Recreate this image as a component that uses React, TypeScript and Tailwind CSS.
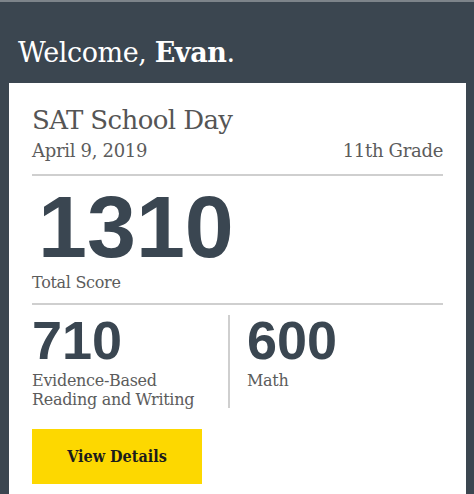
export default function App() {
  const serif = { fontFamily: '"DejaVu Serif", serif' } as const;
  const sans = { fontFamily: '"Liberation Sans", Arial, sans-serif' } as const;
  return (
    <div className="w-[474px] h-[494px] overflow-hidden bg-[#3b4650] border-t-2 border-[#7d848a]">
      <div className="pl-[18px] pt-[35px] h-[81px]">
        <h1 className="text-[27px] leading-[32px] text-white tracking-[-0.4px]" style={serif}>
          Welcome, <span className="font-bold">Evan</span>.
        </h1>
      </div>
      <div className="ml-[9px] mr-[8px] bg-white px-[23px] pt-[22px] h-[420px]">
        <div className="text-[26px] leading-[30px] text-[#555] tracking-[-0.6px]" style={serif}>
          SAT School Day
        </div>
        <div className="flex justify-between text-[18px] leading-[22px] text-[#5c5c5c] mt-[5px] tracking-[-0.3px]" style={serif}>
          <span>April 9, 2019</span>
          <span>11th Grade</span>
        </div>
        <div className="h-[2px] bg-[#cfcfcf] mt-[12px]" />
        <div className="text-[88px] leading-[80px] font-bold text-[#3a4651] mt-[11px] pl-[6px]" style={sans}>
          1310
        </div>
        <div className="mt-[6px] text-[16px] leading-[20px] text-[#5c5c5c] tracking-[-0.3px]" style={serif}>
          Total Score
        </div>
        <div className="h-[2px] bg-[#cfcfcf] mt-[10px]" />
        <div className="flex mt-[8px]">
          <div className="w-[196px] pr-2">
            <div className="text-[54px] leading-[54px] font-bold text-[#3a4651]" style={sans}>
              710
            </div>
            <div className="mt-[4px] text-[16px] leading-[19px] text-[#5c5c5c] tracking-[-0.3px]" style={serif}>
              Evidence-Based
              <br />
              Reading and Writing
            </div>
          </div>
          <div className="w-[2px] bg-[#cfcfcf] h-[93px] mt-[2px]" />
          <div className="pl-[17px]">
            <div className="text-[54px] leading-[54px] font-bold text-[#3a4651]" style={sans}>
              600
            </div>
            <div className="mt-[4px] text-[16px] leading-[19px] text-[#5c5c5c] tracking-[-0.3px]" style={serif}>
              Math
            </div>
          </div>
        </div>
        <button
          className="mt-[20px] w-[170px] h-[55px] bg-[#fdd800] text-[16px] font-bold text-[#1c1c1c] flex items-center justify-center"
          style={{ fontFamily: '"DejaVu Serif Condensed", "DejaVu Serif", serif' }}
        >
          View Details
        </button>
      </div>
    </div>
  );
}
